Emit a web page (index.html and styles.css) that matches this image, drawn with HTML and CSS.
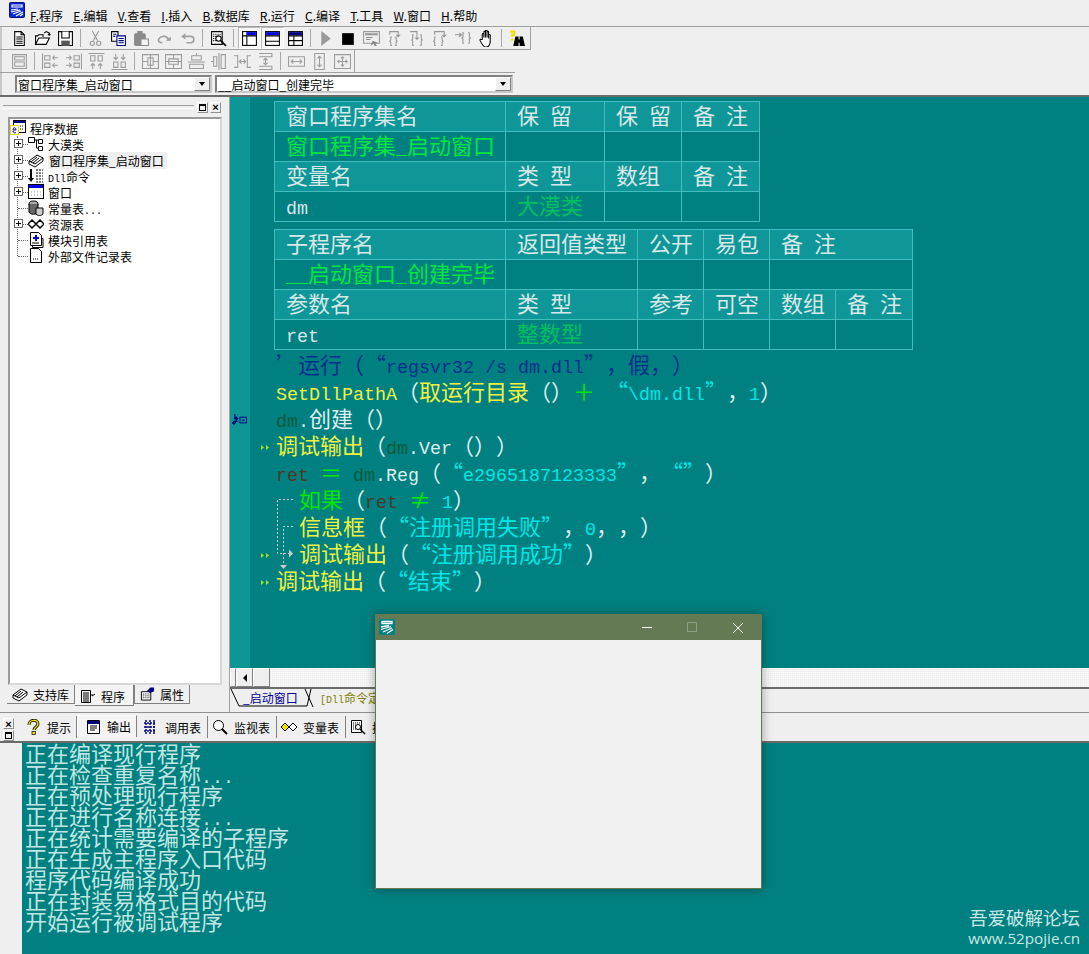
FILE: index.html
```html
<!DOCTYPE html>
<html lang="zh-CN">
<head>
    <meta charset="UTF-8">
    <title>易语言</title>
    <link rel="stylesheet" href="styles.css">
</head>
<body>
<svg class="defs" width="0" height="0">
    <symbol id="logo" viewBox="0 0 16 16">
        <rect x="0.5" y="0.5" width="15" height="15" rx="1" fill="#0a2ad8" stroke="#0a0a80"/>
        <path d="M3 3h10v2H3zM2 8l7-1M2 10l9-2M4 12l8-3M7 14l7-4M11 14l3-2" fill="none" stroke="#fff" stroke-width="1.2"/>
    </symbol>
    <symbol id="logo-w" viewBox="0 0 16 16">
        <rect width="16" height="16" rx="2" fill="#008080"/>
        <path d="M3 2.5h10v2H3zM2 8l8-1.5M2 10.5l10-3M4 13l9-4M8 14.5l6-4" fill="none" stroke="#fff" stroke-width="1.3"/>
    </symbol>
    <symbol id="i-new" viewBox="0 0 16 16"><path d="M3.500 1.500h6l3 3v10h-9zM9.500 1.500v3h3M5 6.500h6M5 8.500h6M5 10.500h6M5 12.500h6" fill="#fff" stroke="#000"/></symbol>
    <symbol id="i-open" viewBox="0 0 16 16"><path d="M1.500 13.500v-8h2l1-1h4v2M1.500 13.500l3-6h10l-3 6zM9.500 3l2-1.500 3 1.500v2M14.500 5l-1.500-1M14.500 5l1-1" fill="#fff" stroke="#000"/></symbol>
    <symbol id="i-save" viewBox="0 0 16 16"><path d="M1.500 1.500h13v13h-13z" fill="#fff" stroke="#000"/><path d="M4.500 1.500v6h7v-6" fill="#fff" stroke="#000"/><rect x="4" y="10" width="8" height="5" fill="#555"/></symbol>
    <symbol id="i-cut" viewBox="0 0 16 16"><path d="M5 1l5 9M11 1L6 10" stroke="#999" fill="none"/><circle cx="5" cy="12.500" r="2" fill="none" stroke="#999"/><circle cx="11" cy="12.500" r="2" fill="none" stroke="#999"/></symbol>
    <symbol id="i-copy" viewBox="0 0 16 16"><path d="M1.500 1.500h6v9h-6z" fill="#fff" stroke="#000"/><path d="M6.500 5.500h8v9h-8z" fill="#fff" stroke="#000080"/><path d="M8 8h5M8 10h5M8 12h5M3 4h3M3 6h2" stroke="#000080"/></symbol>
    <symbol id="i-paste" viewBox="0 0 16 16"><rect x="1" y="3" width="11" height="12" rx="1.500" fill="#8a8a8a"/><rect x="4" y="1" width="5" height="3" fill="#8a8a8a"/><path d="M7.500 8.500h7v6h-7z" fill="#f4f4f4" stroke="#8a8a8a"/></symbol>
    <symbol id="i-redo" viewBox="0 0 16 16"><path d="M12 10C11 5 5 5 3 8s1 4 3 4" fill="none" stroke="#a0a0a0" stroke-width="1.500"/><path d="M9 10h5V6z" fill="#a0a0a0"/></symbol>
    <symbol id="i-undo" viewBox="0 0 16 16"><path d="M4 6h7c4 0 4 6 0 6H7" fill="none" stroke="#a0a0a0" stroke-width="1.500"/><path d="M6 3L2 6l4 3z" fill="#a0a0a0"/></symbol>
    <symbol id="i-prev" viewBox="0 0 16 16"><path d="M1.500 1.500h10v12h-10z" fill="#fff" stroke="#000"/><path d="M3 4h7M3 6h3M3 8h3M3 10h3" stroke="#000" stroke-dasharray="1 1"/><circle cx="8" cy="8" r="2.500" fill="#fff" stroke="#000"/><path d="M10 10l5 5" stroke="#000" stroke-width="1.500"/></symbol>
    <symbol id="i-lay1" viewBox="0 0 16 16"><rect x="1.500" y="1.500" width="13" height="13" fill="#fff" stroke="#000"/><rect x="5" y="2" width="9" height="3" fill="#0000e0"/><path d="M1.500 5.500h13M5.500 5.500v9" stroke="#000"/></symbol>
    <symbol id="i-lay2" viewBox="0 0 16 16"><rect x="1.500" y="1.500" width="13" height="13" fill="#fff" stroke="#000"/><rect x="2" y="2" width="12" height="3" fill="#0000e0"/><path d="M1.500 5.500h13M1.500 10.500h13" stroke="#000"/></symbol>
    <symbol id="i-lay3" viewBox="0 0 16 16"><rect x="1.500" y="1.500" width="13" height="13" fill="#fff" stroke="#000"/><rect x="2" y="2" width="12" height="3" fill="#000080"/><path d="M1.500 5.500h13M1.500 10h13M6.500 5.500v9" stroke="#000"/></symbol>
    <symbol id="i-play" viewBox="0 0 16 16"><path d="M4 1l9 7-9 7z" fill="#9a9a9a"/></symbol>
    <symbol id="i-stop" viewBox="0 0 16 16"><rect x="2" y="3" width="11" height="11" fill="#000"/></symbol>
    <symbol id="i-run" viewBox="0 0 16 16"><path d="M.5 1.500h15v11H.5z" fill="#eee" stroke="#9a9a9a"/><path d="M2 3h12v2H2z" fill="#9a9a9a"/><path d="M3 7h6M3 9h4" stroke="#8a8a8a"/><path d="M7 15l2-5 5 2-2 1 1 2-2 0-1-2z" fill="#8a8a8a"/></symbol>
    <symbol id="i-br1" viewBox="0 0 16 16"><path d="M3.500 4.500V1.500h8V5M5.500 6.500h-1v3l-1 1 1 1v3h1M8.500 6.500h1v3l1 1-1 1v3h-1" fill="none" stroke="#969696"/><path d="M9 4.500h5L11.500 7z" fill="#969696"/></symbol>
    <symbol id="i-br2" viewBox="0 0 16 16"><path d="M1 1.500h6.500V7M4.500 4.500h-1v4l-1 1 1 1v4h1M10.500 4.500h1v4l1 1-1 1v4h-1" fill="none" stroke="#969696"/><path d="M5 7h5L7.500 9.500z" fill="#969696"/></symbol>
    <symbol id="i-br3" viewBox="0 0 16 16"><path d="M2.500 4.500V1.500h9V5M3.500 6.500h-1v3l-1 1 1 1v3h1M8.500 6.500h1v3l1 1-1 1v3h-1" fill="none" stroke="#969696"/><path d="M9 4.500h5L11.500 7z" fill="#969696"/></symbol>
    <symbol id="i-br4" viewBox="0 0 16 16"><path d="M0 4.500h4M8.500 2.500h-1v4l-1 1 1 1v4h1M12.500 2.500h1v4l1 1-1 1v4h-1" fill="none" stroke="#969696"/><path d="M4 2l3 2.500L4 7z" fill="#969696"/></symbol>
    <symbol id="i-hand" viewBox="0 0 16 16"><path d="M4 9V4c0-1 1.500-1 1.500 0v3-5c0-1 1.500-1 1.500 0v5-6c0-1 1.500-1 1.500 0v6-5c0-1 1.500-1 1.500 0v6-3c0-1 1.500-1 1.500 0v6c0 3-2 5-4 5H7c-2 0-3-2-5-6-.5-1 .5-1.500 1-1z" fill="#fff" stroke="#000"/></symbol>
    <symbol id="i-help" viewBox="0 0 16 16"><path d="M1 1.500h4v3H3v2" fill="none" stroke="#f0e000" stroke-width="2"/><path d="M2 8h2v2H2z" fill="#f0e000"/><path d="M6 6h3v3h1V6h3l2 9h-5v-3H9v3H4z" fill="#000"/></symbol>
    <symbol id="a-form" viewBox="0 0 16 16"><path d="M1.500 1.500h13v13h-13zM3.500 3.500h9v3h-9zM3.500 8.500h9v4h-9z" fill="none" stroke="#9c9c9c"/></symbol>
    <symbol id="a-l" viewBox="0 0 16 16"><path d="M.5 .5v15M2.500 2.500h5v4h-5zM2.500 9.500h5v4h-5zM15 4.500h-5M12 2.500l-2 2 2 2M15 11.500h-5M12 9.500l-2 2 2 2" fill="none" stroke="#9c9c9c"/></symbol>
    <symbol id="a-r" viewBox="0 0 16 16"><path d="M15.500 .5v15M8.500 2.500h5v4h-5zM8.500 9.500h5v4h-5zM1 4.500h5M4 2.500l2 2-2 2M1 11.500h5M4 9.500l2 2-2 2" fill="none" stroke="#9c9c9c"/></symbol>
    <symbol id="a-t" viewBox="0 0 16 16"><path d="M.5 .5h15M2.500 2.500h4v5h-4zM9.500 2.500h4v5h-4zM4.500 15v-5M2.500 12l2-2 2 2M11.500 15v-5M9.500 12l2-2 2 2" fill="none" stroke="#9c9c9c"/></symbol>
    <symbol id="a-b" viewBox="0 0 16 16"><path d="M.5 15.500h15M2.500 8.500h4v5h-4zM9.500 8.500h4v5h-4zM4.500 1v5M2.500 4l2 2 2-2M11.500 1v5M9.500 4l2 2 2-2" fill="none" stroke="#9c9c9c"/></symbol>
    <symbol id="a-ch" viewBox="0 0 16 16"><path d="M.5 1.500h15v13H.5zM8 2v12M5.500 4.500h5v7h-5zM1 8h4M15 8h-4" fill="none" stroke="#9c9c9c"/></symbol>
    <symbol id="a-cv" viewBox="0 0 16 16"><path d="M.5 1.500h15v13H.5zM1 8h14M3.500 5.500h9v5h-9zM8 2v3M8 11v3" fill="none" stroke="#9c9c9c"/></symbol>
    <symbol id="a-th" viewBox="0 0 16 16"><path d="M0 8.500h16M3.500 2.500h9v4h-9zM1.500 10.500h13v4h-13zM8 0v2" fill="none" stroke="#9c9c9c"/></symbol>
    <symbol id="a-tv" viewBox="0 0 16 16"><path d="M7.500 0v16M2.500 3.500h3v9h-3zM9.500 1.500h4v13h-4zM0 8h2" fill="none" stroke="#9c9c9c"/></symbol>
    <symbol id="a-sh" viewBox="0 0 16 16"><path d="M0 2.500h3.500v11H0M16 2.500h-3.500v11H16M5 8h6M7 6L5 8l2 2M9 6l2 2-2 2" fill="none" stroke="#9c9c9c"/></symbol>
    <symbol id="a-sv" viewBox="0 0 16 16"><path d="M2 .5h12v3H2M2 15.500h12v-3H2M8 5v6M6 7l2-2 2 2M6 9l2 2 2-2" fill="none" stroke="#9c9c9c"/></symbol>
    <symbol id="a-w" viewBox="0 0 16 16"><path d="M.5 3.500h15v9H.5zM3 8h10M5 6L3 8l2 2M11 6l2 2-2 2" fill="none" stroke="#9c9c9c"/></symbol>
    <symbol id="a-h" viewBox="0 0 16 16"><path d="M3.500 .5h9v15h-9zM8 3v10M6 5l2-2 2 2M6 11l2 2 2-2" fill="none" stroke="#9c9c9c"/></symbol>
    <symbol id="a-c" viewBox="0 0 16 16"><path d="M.5 1.500h15v13H.5zM8 4v8M4 8h8M6.500 5L8 3.500 9.500 5M6.500 11L8 12.500 9.500 11M5 6.500L3.500 8 5 9.500M11 6.500L12.500 8 11 9.500" fill="none" stroke="#9c9c9c"/></symbol>
    <symbol id="t-root" viewBox="0 0 16 16"><rect x="3.500" y=".5" width="12" height="12" fill="#fff" stroke="#000"/><rect x="4" y="1" width="11" height="2" fill="#000080"/><path d="M10 6h4M10 9h4" stroke="#000" stroke-dasharray="1 1"/><rect x=".5" y="5.500" width="8" height="9" fill="#fff" stroke="#e8d800"/><path d="M6 10H3c0-3 3-3 3 0M3 11c0 2 2 2 3 1.500" fill="none" stroke="#000080"/></symbol>
    <symbol id="t-class" viewBox="0 0 16 16"><path d="M.5 1.500h6v5h-6zM10.500 3.500h4v4h-4zM10.500 10.500h4v4h-4zM6.500 4h4M8.500 4v8h2" fill="#fff" stroke="#000"/></symbol>
    <symbol id="t-mod" viewBox="0 0 16 16"><path d="M1 9l8-6 6 3-8 6zM1 9v3l6 3 8-6V6M3 10l6-5M5 11l6-5" fill="#fff" stroke="#000"/></symbol>
    <symbol id="t-dll" viewBox="0 0 16 16"><path d="M3 1v11" stroke="#000" stroke-width="2"/><path d="M0 10l3 4 3-4z" fill="#000"/><path d="M8 2h7M8 5h7M8 8h7M8 11h7M8 14h7" stroke="#000" stroke-dasharray="2 1"/></symbol>
    <symbol id="t-win" viewBox="0 0 16 16"><rect x=".5" y=".5" width="15" height="14" fill="#fff" stroke="#000"/><rect x="1" y="1" width="14" height="3" fill="#0000e0"/><path d="M3 8h10M3 11h10" stroke="#999" stroke-dasharray="1 2"/></symbol>
    <symbol id="t-const" viewBox="0 0 16 16"><ellipse cx="5.500" cy="4" rx="4.500" ry="3" fill="#aaa" stroke="#000"/><path d="M1 4v8c1 3 8 3 9 0V4" fill="#666" stroke="#000"/><path d="M8 8h7v6c-2 2-5 2-7 0z" fill="#ccc" stroke="#000"/></symbol>
    <symbol id="t-res" viewBox="0 0 16 16"><path d="M4 4l4 4-4 4-4-4zM12 4l4 4-4 4-4-4z" fill="#fff" stroke="#000" stroke-width="1.500"/></symbol>
    <symbol id="t-ref" viewBox="0 0 16 16"><path d="M2.500 .5h8l3 3v10h-11z" fill="#fff" stroke="#000"/><path d="M13.500 6.500h1.500v9H4.500v-1.500" fill="none" stroke="#000"/><path d="M8 3v6M5 6h6" stroke="#0000d0" stroke-width="2"/><path d="M4 11h7" stroke="#000"/></symbol>
    <symbol id="t-file" viewBox="0 0 16 16"><path d="M2.500 .5h8l3 3v11h-11z" fill="#fff" stroke="#000"/><path d="M5 11h1M7 11h1M9 11h1" stroke="#000"/></symbol>
    <symbol id="p-prop" viewBox="0 0 16 16"><path d="M1.500 5.500h10v9h-10z" fill="#fff" stroke="#000"/><path d="M3 8h7M3 10h7M3 12h7" stroke="#000" stroke-dasharray="1 1"/><path d="M7 5l4-4h4v4l-4 2z" fill="#000080"/></symbol>
    <symbol id="p-code" viewBox="0 0 16 16"><path d="M1.500 2.500h9v12h-9zM3 5h6M3 7h6M3 9h6M3 11h6M3 13h6M15 6l-3 2M12 8v-2" fill="none" stroke="#000"/></symbol>
    <symbol id="b-tip" viewBox="0 0 16 16"><path d="M4 6c0-6 9-6 9-1 0 3-4 3-4 6" fill="none" stroke="#000" stroke-width="3"/><path d="M4 6c0-6 9-6 9-1 0 3-4 3-4 6" fill="none" stroke="#f0e000" stroke-width="1.500"/><rect x="7" y="12.500" width="3.500" height="3" fill="#f0e000" stroke="#000" stroke-width=".7"/></symbol>
    <symbol id="b-out" viewBox="0 0 16 16"><path d="M1.500 1.500h12v13h-12zM4 7h7M4 9h7M4 11h5" fill="#fff" stroke="#000"/><rect x="2" y="2" width="11" height="3" fill="#000080"/></symbol>
    <symbol id="b-call" viewBox="0 0 16 16"><path d="M1 4h12M1 8h12M1 12h12M3 1v14M7 1v14M11 1v14" stroke="#000080" stroke-width="1.500" stroke-dasharray="2 1"/></symbol>
    <symbol id="b-mag" viewBox="0 0 16 16"><circle cx="6.500" cy="6.500" r="5" fill="#fff" stroke="#000"/><path d="M10 10l5 5" stroke="#000" stroke-width="2"/></symbol>
    <symbol id="b-var" viewBox="0 0 16 16"><path d="M4 4l4 4-4 4-4-4z" fill="#f0e000" stroke="#000"/><path d="M12 4l4 4-4 4-4-4z" fill="#fff" stroke="#000"/></symbol>
    <symbol id="e-bp" viewBox="0 0 16 16"><path d="M3 1v5h3M4 4l2 2-2 2M6 9H2v3M0 10l2 2 2-2" fill="none" stroke="#000080" stroke-width="1.300"/><rect x="8.500" y="4.500" width="7" height="6" fill="none" stroke="#000080"/><rect x="11" y="7" width="2" height="1.500" fill="#000080"/></symbol>
    <symbol id="e-mk" viewBox="0 0 9 7"><path d="M0 1l3 2.500L0 6zM5 1l3 2.500L5 6z" fill="#a8e020"/></symbol>
</svg>

<div class="app">
    <div class="menu-bar">
        <svg class="logo"><use href="#logo"/></svg>
        <span class="menu-item"><u>F</u>.程序</span>
        <span class="menu-item"><u>E</u>.编辑</span>
        <span class="menu-item"><u>V</u>.查看</span>
        <span class="menu-item"><u>I</u>.插入</span>
        <span class="menu-item"><u>B</u>.数据库</span>
        <span class="menu-item"><u>R</u>.运行</span>
        <span class="menu-item"><u>C</u>.编译</span>
        <span class="menu-item"><u>T</u>.工具</span>
        <span class="menu-item"><u>W</u>.窗口</span>
        <span class="menu-item"><u>H</u>.帮助</span>
    </div>

    <div class="tool-bar tool-main">
        <span class="tb"><svg><use href="#i-new"/></svg></span>
        <span class="tb"><svg><use href="#i-open"/></svg></span>
        <span class="tb"><svg><use href="#i-save"/></svg></span>
        <span class="sep sep-6"></span>
        <span class="tb"><svg><use href="#i-cut"/></svg></span>
        <span class="tb"><svg><use href="#i-copy"/></svg></span>
        <span class="tb"><svg><use href="#i-paste"/></svg></span>
        <span class="tb"><svg><use href="#i-redo"/></svg></span>
        <span class="tb"><svg><use href="#i-undo"/></svg></span>
        <span class="sep"></span>
        <span class="tb"><svg><use href="#i-prev"/></svg></span>
        <span class="sep"></span>
        <span class="tb on"><svg><use href="#i-lay1"/></svg></span>
        <span class="tb on"><svg><use href="#i-lay2"/></svg></span>
        <span class="tb"><svg><use href="#i-lay3"/></svg></span>
        <span class="sep sep-6"></span>
        <span class="tb"><svg><use href="#i-play"/></svg></span>
        <span class="tb"><svg><use href="#i-stop"/></svg></span>
        <span class="tb"><svg><use href="#i-run"/></svg></span>
        <span class="tb"><svg><use href="#i-br1"/></svg></span>
        <span class="tb"><svg><use href="#i-br2"/></svg></span>
        <span class="tb"><svg><use href="#i-br3"/></svg></span>
        <span class="tb"><svg><use href="#i-br4"/></svg></span>
        <span class="tb"><svg><use href="#i-hand"/></svg></span>
        <span class="sep"></span>
        <span class="tb"><svg><use href="#i-help"/></svg></span>
    </div>

    <div class="tool-bar tool-align">
        <span class="tb"><svg><use href="#a-form"/></svg></span>
        <span class="sep"></span>
        <span class="tb"><svg><use href="#a-l"/></svg></span>
        <span class="tb"><svg><use href="#a-r"/></svg></span>
        <span class="tb"><svg><use href="#a-t"/></svg></span>
        <span class="tb"><svg><use href="#a-b"/></svg></span>
        <span class="sep"></span>
        <span class="tb"><svg><use href="#a-ch"/></svg></span>
        <span class="tb"><svg><use href="#a-cv"/></svg></span>
        <span class="tb"><svg><use href="#a-th"/></svg></span>
        <span class="tb"><svg><use href="#a-tv"/></svg></span>
        <span class="tb"><svg><use href="#a-sh"/></svg></span>
        <span class="tb"><svg><use href="#a-sv"/></svg></span>
        <span class="sep"></span>
        <span class="tb"><svg><use href="#a-w"/></svg></span>
        <span class="tb"><svg><use href="#a-h"/></svg></span>
        <span class="tb"><svg><use href="#a-c"/></svg></span>
    </div>

    <div class="combo-bar">
        <div class="combo combo-a"><span class="combo-text">窗口程序集_启动窗口</span><span class="combo-btn"></span></div>
        <div class="combo combo-b"><span class="combo-text">__启动窗口_创建完毕</span><span class="combo-btn"></span></div>
    </div>

    <div class="main">
        <!-- 左边的程序面板 -->
        <div class="left-pane">
            <div class="pane-head">
                <span class="grip"></span>
                <span class="mini-btn mini-max"></span>
                <span class="mini-btn">×</span>
            </div>
            <div class="tree-box">
                <div class="tree-row tree-root"><svg class="tree-ic"><use href="#t-root"/></svg><span>程序数据</span></div>
                <div class="tree-kids">
                    <div class="tree-row"><i class="plus"></i><svg class="tree-ic"><use href="#t-class"/></svg><span>大漠类</span></div>
                    <div class="tree-row"><i class="plus"></i><svg class="tree-ic"><use href="#t-mod"/></svg><span class="sel">窗口程序集_启动窗口</span></div>
                    <div class="tree-row"><i class="plus"></i><svg class="tree-ic"><use href="#t-dll"/></svg><span><b class="tree-lat">Dll</b>命令</span></div>
                    <div class="tree-row"><i class="plus"></i><svg class="tree-ic"><use href="#t-win"/></svg><span>窗口</span></div>
                    <div class="tree-row"><svg class="tree-ic"><use href="#t-const"/></svg><span>常量表<b class="tree-lat">...</b></span></div>
                    <div class="tree-row"><i class="plus"></i><svg class="tree-ic"><use href="#t-res"/></svg><span>资源表</span></div>
                    <div class="tree-row"><svg class="tree-ic"><use href="#t-ref"/></svg><span>模块引用表</span></div>
                    <div class="tree-row"><svg class="tree-ic"><use href="#t-file"/></svg><span>外部文件记录表</span></div>
                </div>
            </div>
            <div class="pane-tabs">
                <span class="pane-tab"><svg><use href="#t-mod"/></svg>支持库</span>
                <span class="pane-tab active"><svg><use href="#p-code"/></svg>程序</span>
                <span class="pane-tab"><svg><use href="#p-prop"/></svg>属性</span>
            </div>
        </div>

        <!-- 代码编辑区 -->
        <div class="editor">
            <div class="code-area">
                <table class="ttb ttb-a">
                    <colgroup><col class="w231"><col class="w99"><col class="w77"><col class="w78"></colgroup>
                    <tr class="hd"><td>窗口程序集名</td><td>保<b class="m"> </b>留</td><td>保<b class="m"> </b>留</td><td>备<b class="m"> </b>注</td></tr>
                    <tr><td class="nm">窗口程序集<b class="m">_</b>启动窗口</td><td></td><td></td><td></td></tr>
                    <tr class="hd"><td>变量名</td><td>类<b class="m"> </b>型</td><td>数组</td><td>备<b class="m"> </b>注</td></tr>
                    <tr><td><b class="m">dm</b></td><td class="ty">大漠类</td><td></td><td></td></tr>
                </table>
                <table class="ttb ttb-b">
                    <colgroup><col class="w231"><col class="w132"><col class="w66"><col class="w66"><col class="w66"><col class="w77"></colgroup>
                    <tr class="hd"><td>子程序名</td><td>返回值类型</td><td>公开</td><td>易包</td><td colspan="2">备<b class="m"> </b>注</td></tr>
                    <tr><td class="nm"><b class="m">__</b>启动窗口<b class="m">_</b>创建完毕</td><td></td><td></td><td></td><td colspan="2"></td></tr>
                    <tr class="hd"><td>参数名</td><td>类<b class="m"> </b>型</td><td>参考</td><td>可空</td><td>数组</td><td>备<b class="m"> </b>注</td></tr>
                    <tr><td><b class="m">ret</b></td><td class="ty">整数型</td><td></td><td></td><td></td><td></td></tr>
                </table>

                <div class="code">
                    <div class="ln"><span class="gut"></span><span class="tx cm">’运行（“<b class="m">regsvr32 /s dm.dll</b>”，假，）</span></div>
                    <div class="ln"><span class="gut"></span><span class="tx"><b class="m yl">SetDllPathA</b>（<span class="yl">取运行目录</span>（）<span class="gr">＋</span><b class="m"> </b><span class="cy">“<b class="m">\dm.dll</b>”</span>，<b class="m cy">1</b>）</span></div>
                    <div class="ln"><span class="gut"><svg class="bp"><use href="#e-bp"/></svg></span><span class="tx"><b class="m dk">dm</b><b class="m">.</b>创建（）</span></div>
                    <div class="ln"><span class="gut"><svg class="mk"><use href="#e-mk"/></svg></span><span class="tx"><span class="yl">调试输出</span>（<b class="m dk">dm</b><b class="m">.Ver</b>（））</span></div>
                    <div class="ln"><span class="gut"></span><span class="tx"><b class="m br">ret </b><span class="gr">＝</span><b class="m"> </b><b class="m dk">dm</b><b class="m">.Reg</b>（<span class="cy">“<b class="m">e2965187123333</b>”</span>，<span class="cy">“”</span>）</span></div>
                    <div class="ln ind"><span class="gut"></span><span class="tx"><span class="gr">如果</span>（<b class="m br">ret </b><span class="gr">≠</span><b class="m"> </b><b class="m cy">1</b>）</span></div>
                    <div class="ln ind"><span class="gut"></span><span class="tx"><span class="yl">信息框</span>（<span class="cy">“注册调用失败”</span>，<b class="m cy">0</b>，，）</span></div>
                    <div class="ln ind"><span class="gut"><svg class="mk"><use href="#e-mk"/></svg></span><span class="tx"><span class="yl">调试输出</span>（<span class="cy">“注册调用成功”</span>）</span></div>
                    <div class="ln"><span class="gut"><svg class="mk"><use href="#e-mk"/></svg></span><span class="tx"><span class="yl">调试输出</span>（<span class="cy">“结束”</span>）</span></div>
                    <svg class="flow" width="24" height="80">
                        <path d="M19 2.500H3.500V56.500H15" fill="none" stroke="#ccc" stroke-dasharray="2 2"/>
                        <path d="M15 52.500l4 4-4 4z" fill="#ccc"/>
                        <path d="M19 29.500H9.500V68" fill="none" stroke="#ccc" stroke-dasharray="2 2"/>
                        <path d="M6 68h7l-3.500 4z" fill="#ccc"/>
                    </svg>
                </div>
            </div>

            <div class="h-scroll">
                <span class="sb-btn sb-thin"></span>
                <span class="sb-btn"><i class="arrow-left"></i></span>
                <span class="sb-btn"></span>
            </div>

            <div class="ed-tabs">
                <svg class="ed-lines" width="160" height="20"><path d="M1 0l8 17h68l4-17M75 0l8 18" fill="none" stroke="#000"/></svg>
                <span class="ed-tab cur">_启动窗口</span>
                <span class="ed-tab dll"><b class="tree-lat">[Dll</b>命令定义表<b class="tree-lat">]</b></span>
            </div>
        </div>
    </div>

    <!-- 下面的输出面板 -->
    <div class="bottom">
        <div class="bottom-head">
            <div class="side-btns"><span class="mini-btn">×</span><span class="mini-btn mini-max"></span></div>
            <div class="bt-tabs">
                <span class="bt-tab t-tip"><svg><use href="#b-tip"/></svg>提示</span>
                <span class="bt-tab t-out active"><svg><use href="#b-out"/></svg>输出</span>
                <span class="bt-tab"><svg><use href="#b-call"/></svg>调用表</span>
                <span class="bt-tab"><svg><use href="#b-mag"/></svg>监视表</span>
                <span class="bt-tab"><svg><use href="#b-var"/></svg>变量表</span>
                <span class="bt-tab"><svg><use href="#i-prev"/></svg>搜寻</span>
            </div>
        </div>
        <div class="output">
            <div>正在编译现行程序</div>
            <div>正在检查重复名称<b class="m">...</b></div>
            <div>正在预处理现行程序</div>
            <div>正在进行名称连接<b class="m">...</b></div>
            <div>正在统计需要编译的子程序</div>
            <div>正在生成主程序入口代码</div>
            <div>程序代码编译成功</div>
            <div>正在封装易格式目的代码</div>
            <div>开始运行被调试程序</div>
        </div>
    </div>

    <!-- 运行起来的窗口 -->
    <div class="run-win">
        <div class="run-title">
            <svg class="run-ic"><use href="#logo-w"/></svg>
            <span class="cap cap-min"></span>
            <span class="cap cap-max"></span>
            <svg class="cap-close" width="12" height="12"><path d="M1 1l10 10M11 1L1 11" stroke="#f4f4f4"/></svg>
        </div>
    </div>

    <div class="mark-text">
        <div class="mark-cn">吾爱破解论坛</div>
        <div class="mark-en">www.52pojie.cn</div>
    </div>
</div>
</body>
</html>
```

FILE: styles.css
```css
html, body {
    margin: 0;
    padding: 0;
}

body {
    width: 1089px;
    height: 954px;
    overflow: hidden;
    background-color: #efefef;
    font-family: "Noto Sans CJK SC", "Liberation Sans", sans-serif;
    font-size: 12px;
    color: #000;
    text-spacing-trim: space-all;
}

.defs {
    position: absolute;
}

.app {
    position: relative;
    width: 1089px;
    height: 954px;
    display: flex;
    flex-direction: column;
    overflow: hidden;
}

b {
    font-weight: normal;
}

/* 菜单和工具条 */
.menu-bar {
    height: 26px;
    display: flex;
    align-items: center;
    padding-left: 9px;
    border-bottom: 1px solid #a0a0a0;
    font-size: 12px;
}

.logo {
    width: 16px;
    height: 16px;
    margin: -6px 5px 0 0;
}

.menu-item {
    margin-right: 10.2px;
    padding-top: 4px;
    white-space: nowrap;
}

.tool-bar {
    display: flex;
    align-items: center;
    width: fit-content;
    padding-left: 8px;
    border-right: 1px solid #a0a0a0;
    box-shadow: inset 2px 0 0 #c8c8c8;
}

.tool-main {
    height: 22px;
    padding-right: 1px;
    border-bottom: 1px solid #a0a0a0;
}

.tool-align {
    height: 22px;
}

.tb {
    width: 23px;
    height: 22px;
    display: flex;
    align-items: center;
    justify-content: center;
    box-sizing: border-box;
}

.tb svg {
    width: 17px;
    height: 17px;
}

.tb.on {
    background-color: #f7f7f7;
    border: 1px solid #fff;
    border-top-color: #b8b8b8;
    border-left-color: #b8b8b8;
}

.sep {
    width: 8px;
    height: 18px;
    position: relative;
}

.sep::before {
    content: "";
    position: absolute;
    left: 3px;
    top: 0;
    bottom: 0;
    width: 1px;
    background-color: #a8a8a8;
}

.sep-6 {
    width: 7px;
}

.combo-bar {
    width: 500px;
    height: 22px;
    padding-left: 15px;
    display: flex;
    gap: 3px;
    align-items: center;
    border-top: 1px solid #a0a0a0;
    box-shadow: inset 2px 0 0 #c8c8c8;
}

.combo {
    height: 18px;
    display: flex;
    align-items: center;
    justify-content: space-between;
    background-color: #fff;
    border: 2px solid #808080;
    border-right-color: #c8c8c8;
    border-bottom-color: #c8c8c8;
    box-sizing: border-box;
    font-size: 12px;
}

.combo-a {
    width: 197px;
}

.combo-b {
    width: 298px;
}

.combo-text {
    padding-left: 1px;
    white-space: nowrap;
}

.combo-btn {
    width: 16px;
    height: 14px;
    background-color: #efefef;
    border: 1px solid #808080;
    border-top-color: #fff;
    border-left-color: #fff;
    box-sizing: border-box;
    display: flex;
    align-items: center;
    justify-content: center;
}

.combo-btn::before {
    content: "";
    border: 3px solid transparent;
    border-top: 4px solid #000;
    border-bottom: 0;
}

/* 主区域 */
.main {
    height: 618px;
    display: flex;
    border-top: 2px solid #6a6a6a;
    border-bottom: 1px solid #909090;
    box-sizing: border-box;
}

.left-pane {
    width: 230px;
    flex: none;
    display: flex;
    flex-direction: column;
    border-right: 1px solid #a0a0a0;
    box-sizing: border-box;
}

.pane-head {
    height: 20px;
    display: flex;
    align-items: center;
    padding-left: 3px;
    padding-right: 8px;
    gap: 2px;
}

.grip {
    flex: 1;
    height: 2px;
    margin-right: 1px;
    border-top: 1px solid #a0a0a0;
    border-bottom: 1px solid #fff;
}

.mini-btn {
    width: 11px;
    height: 11px;
    box-sizing: border-box;
    display: flex;
    align-items: center;
    justify-content: center;
    font-family: "Liberation Sans", sans-serif;
    font-size: 11px;
    font-weight: bold;
    line-height: 10px;
    border: 1px solid #fff;
    border-right-color: #909090;
    border-bottom-color: #909090;
}

.mini-max::before {
    content: "";
    width: 7px;
    height: 7px;
    box-sizing: border-box;
    border: 1px solid #000;
    border-top-width: 2px;
}

.tree-box {
    flex: 1;
    margin: 0 7px 0 8px;
    padding: 1px 0 0 0;
    background-color: #fff;
    border: 2px solid #9a9a9a;
    border-right-color: #d8d8d8;
    border-bottom-color: #d8d8d8;
    position: relative;
    min-height: 0;
}

.tree-row {
    height: 16px;
    display: flex;
    align-items: center;
    font-size: 12px;
    white-space: nowrap;
    position: relative;
}

.tree-ic {
    width: 16px;
    height: 16px;
    flex: none;
    margin-right: 4px;
}

.tree-kids {
    position: relative;
    padding-left: 8px;
}

.tree-kids::before {
    content: "";
    position: absolute;
    left: 7px;
    top: 0;
    bottom: 8px;
    border-left: 1px dotted #666;
}

.tree-kids .tree-row {
    padding-left: 10px;
}

.tree-kids .tree-row::before {
    content: "";
    position: absolute;
    left: 0;
    width: 10px;
    top: 8px;
    border-top: 1px dotted #666;
}

.plus {
    position: absolute;
    left: -4px;
    top: 3px;
    width: 9px;
    height: 9px;
    box-sizing: border-box;
    border: 1px solid #666;
    background:
        linear-gradient(#000, #000) center / 5px 1px no-repeat,
        linear-gradient(#000, #000) center / 1px 5px no-repeat,
        #fff;
    z-index: 1;
}

.sel {
    background-color: #efefef;
    padding: 0 3px 0 1px;
}

.tree-lat {
    font-family: "Liberation Mono", monospace;
    font-size: 10px;
}

.pane-tabs {
    height: 27px;
    display: flex;
    padding-left: 7px;
    font-size: 12px;
}

.pane-tab {
    height: 19px;
    display: flex;
    align-items: center;
    gap: 5px;
    padding: 0 5px;
    box-sizing: border-box;
    background-color: #efefef;
    border-right: 1px solid #808080;
    border-bottom: 1px solid #808080;
    white-space: nowrap;
}

.pane-tab svg {
    width: 16px;
    height: 16px;
}

.pane-tab:nth-child(1) {
    width: 68px;
}

.pane-tab:nth-child(2) {
    width: 59px;
    height: 21px;
    padding-top: 2px;
    background-color: #f4f4f4;
}

.pane-tab:nth-child(3) {
    width: 56px;
    border-left: 1px solid #808080;
}

/* 编辑器 */
.editor {
    flex: 1;
    min-width: 0;
    display: flex;
    flex-direction: column;
}

.code-area {
    height: 571px;
    padding-top: 4px;
    box-sizing: border-box;
    background: linear-gradient(to right, #0e9696 20px, #008080 20px);
    color: #dceeee;
    font-size: 22px;
    position: relative;
    font-feature-settings: "fwid";
}

.ttb {
    margin-left: 44px;
    border-collapse: collapse;
    table-layout: fixed;
    font-size: 22px;
    line-height: 24px;
    color: #d8e8e8;
}

.ttb-a {
    width: 485px;
    margin-bottom: 7px;
}

.ttb-b {
    width: 638px;
}

.ttb td {
    height: 30px;
    padding: 0 0 5px 11px;
    box-sizing: border-box;
    border: 1px solid #42bcbc;
    white-space: nowrap;
}

.ttb .hd td {
    background-color: #0e9698;
}

.w231 { width: 231px; }
.w132 { width: 132px; }
.w99 { width: 99px; }
.w78 { width: 78px; }
.w77 { width: 77px; }
.w66 { width: 66px; }

.ttb .nm {
    color: #00e640;
}

.ttb .ty {
    color: #00c060;
}

/* 半角字符用等宽字体，一个字符 11 像素 */
.m {
    font-family: "Liberation Mono", monospace;
    font-size: 18.33px;
    line-height: 0;
    white-space: pre;
}

.code {
    position: relative;
}

.ln {
    height: 27px;
    display: grid;
    grid-template-columns: 46px 1fr;
    align-items: center;
    line-height: 27px;
    white-space: nowrap;
}

.gut {
    display: flex;
    align-items: center;
    justify-content: flex-end;
    padding: 5px 6px 0 0;
}

.ind .tx {
    padding-left: 23px;
}

.mk {
    width: 9px;
    height: 7px;
}

.bp {
    width: 15px;
    height: 15px;
    margin-right: 23px;
}

.cm, .cm .m { color: #00308c; }
.yl { color: #f0f040; }
.cy { color: #00e6e6; }
.gr { color: #00e800; }
.dk { color: #0a5a3a; }
.br { color: #4a3a2a; }

.flow {
    position: absolute;
    left: 44px;
    top: 147px;
}

.h-scroll {
    height: 19px;
    display: flex;
    background-color: #f7f7f7;
    background-image: linear-gradient(45deg, #ececec 25%, transparent 25%, transparent 75%, #ececec 75%);
    background-size: 2px 2px;
    border-bottom: 2px solid #6a6a6a;
}

.sb-btn {
    width: 17px;
    background-color: #efefef;
    border: 1px solid #808080;
    border-top-color: #fff;
    border-left-color: #fff;
    box-sizing: border-box;
    display: flex;
    align-items: center;
    justify-content: center;
}

.sb-thin {
    width: 6px;
}

.arrow-left {
    border: 4px solid transparent;
    border-right: 4px solid #000;
    border-left: 0;
}

.ed-tabs {
    flex: 1;
    position: relative;
    display: flex;
    align-items: flex-start;
    padding-left: 13px;
}

.ed-lines {
    position: absolute;
    left: 0;
    top: 0;
}

.ed-tab {
    height: 18px;
    line-height: 17px;
    white-space: nowrap;
    font-size: 12px;
}

.ed-tab.cur {
    color: #000090;
    width: 77px;
}

.ed-tab.dll {
    color: #808000;
}

/* 底部 */
.bottom {
    flex: 1;
    min-height: 0;
    display: flex;
    flex-direction: column;
}

.bottom-head {
    height: 28px;
    display: flex;
    align-items: flex-start;
    border-bottom: 2px solid #6a6a6a;
}

.side-btns {
    width: 20px;
    padding: 5px 0 0 3px;
    box-sizing: border-box;
    display: flex;
    flex-direction: column;
    gap: 1px;
}

.bt-tabs {
    display: flex;
    padding-top: 3px;
    font-size: 12px;
}

.bt-tab {
    height: 22px;
    display: flex;
    align-items: center;
    gap: 6px;
    padding: 0 4px;
    width: 69px;
    box-sizing: border-box;
    border-right: 1px solid #808080;
    white-space: nowrap;
}

.bt-tab svg {
    width: 16px;
    height: 16px;
    flex: none;
}

.t-tip {
    width: 57px;
    padding-left: 5px;
}

.t-out {
    width: 60px;
    padding-left: 8px;
    gap: 5px;
}

.bt-tab.active {
    margin-top: -1px;
    background-color: #f4f4f4;
    border-top: 1px solid #fff;
    border-left: 1px solid #fff;
    margin-right: 2px;
}

.output {
    flex: 1;
    margin-left: 22px;
    padding-left: 3px;
    background-color: #008080;
    color: #bfe6e2;
    font-size: 22px;
    white-space: nowrap;
}

.output div {
    height: 21px;
    line-height: 19px;
}

/* 浮动窗口，盖在上面 */
.run-win {
    position: absolute;
    left: 375px;
    top: 614px;
    width: 387px;
    height: 275px;
    box-sizing: border-box;
    border: 1px solid #62784f;
    background-color: #f0f0f0;
    box-shadow: 0 0 10px rgba(0, 0, 0, 0.35);
}

.run-title {
    height: 25px;
    background-color: #637a55;
    position: relative;
}

.run-ic {
    position: absolute;
    left: 3px;
    top: 4px;
    width: 16px;
    height: 16px;
}

.cap {
    position: absolute;
    box-sizing: border-box;
}

.cap-min {
    left: 266px;
    top: 12px;
    width: 10px;
    height: 1px;
    background-color: #fff;
}

.cap-max {
    left: 311px;
    top: 7px;
    width: 10px;
    height: 10px;
    border: 1px solid #8e9e84;
}

.cap-close {
    position: absolute;
    left: 356px;
    top: 7px;
}

.mark-text {
    position: absolute;
    right: 9px;
    top: 906px;
    color: #c8e8e6;
    text-align: right;
}

.mark-cn {
    font-size: 18.5px;
    line-height: 22px;
}

.mark-en {
    font-family: "Open Sans", sans-serif;
    font-size: 15.2px;
    line-height: 20px;
}
```
